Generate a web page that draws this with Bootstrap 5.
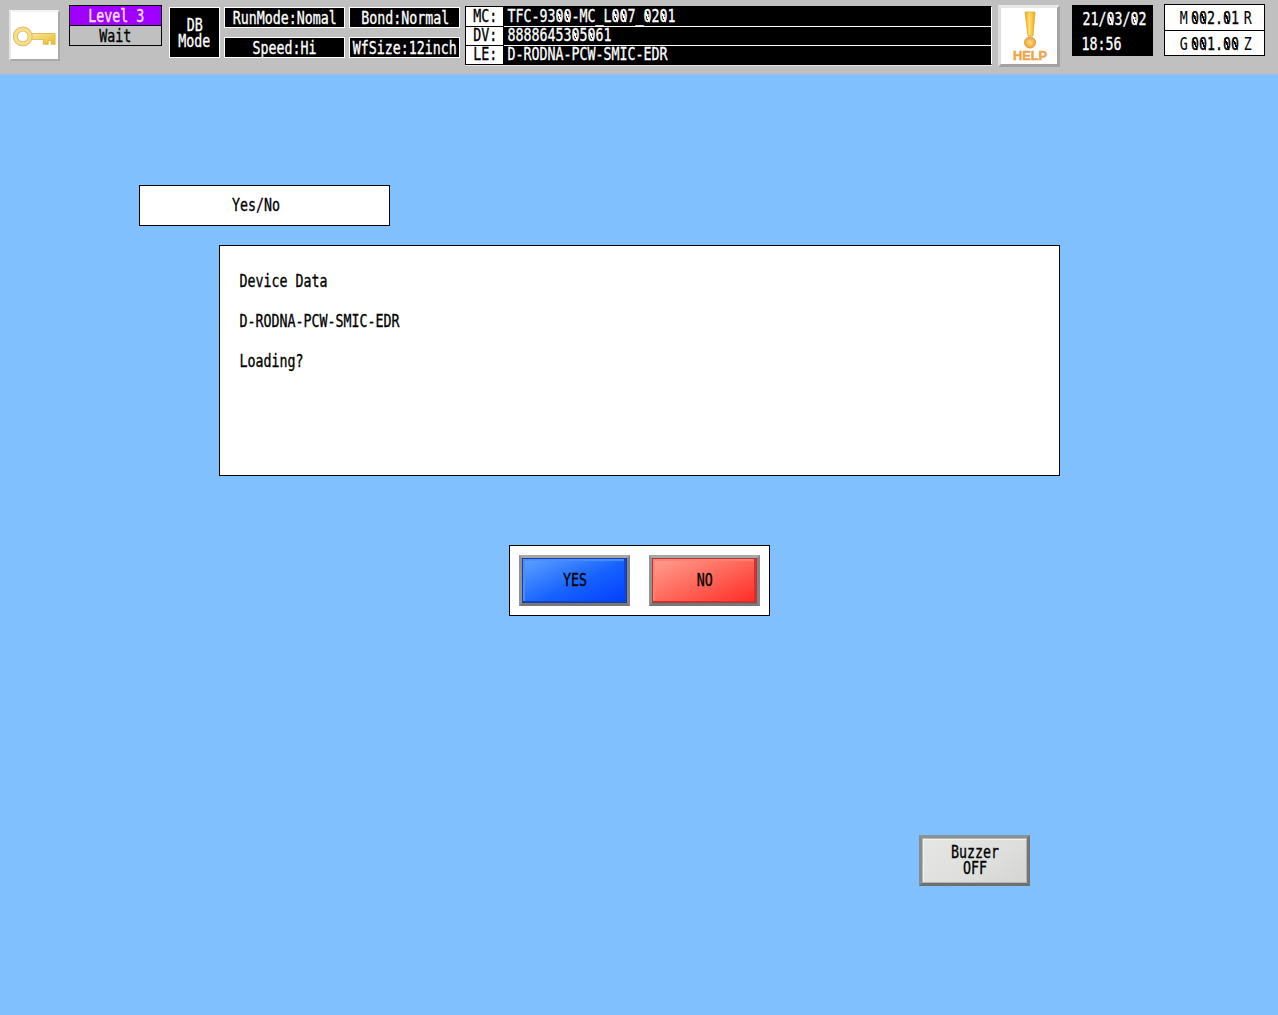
<!DOCTYPE html>
<html lang="en">
<head>
<meta charset="utf-8">
<title>Yes/No</title>
<link href="https://cdn.jsdelivr.net/npm/bootstrap@5.3.0/dist/css/bootstrap.min.css" rel="stylesheet">
<style>
body{background:#80c0ff;color:#000;font:17.5px/16px "DejaVu Sans Mono",monospace;width:1278px;height:1015px;overflow:hidden}
.topbar{height:75px;background:linear-gradient(#c0c0c0 72px,#b9bfc6 74px,#80c0ff 75px)}
/* terminal face: every character cell is 8px wide */
.tx{display:inline-block;white-space:pre;transform:translate(.4px,-.7px) scaleX(.7593);flex:none;-webkit-text-stroke:.35px currentColor}
.level .tx,.blk .tx,.key3d .tx{transform:translate(.3px,0) scaleX(.7593)}
.tl{transform-origin:0 50%}
/* slash through the zero */
.z{background:linear-gradient(to top right,transparent 42%,currentColor 42% 58%,transparent 58%) 2px 4px/6.5px 12px no-repeat}
.keybtn{width:51px;height:51px;margin:10px 0 0 9px;background:#fff;border:2px solid;border-color:#f2f2f2 #aaa #aaa #e6e6e6}
.level{width:93px;height:41px;margin:5px 0 0 9px;border:1px solid #000}
.lv-a{height:20px;background:#a000ff;color:#ffe8ff;border-bottom:1px solid #000}
.lv-b{height:19px}
.blk{background:#000;color:#fff;border:1px solid #fff}
.db{width:51px;height:51px;margin:7px 0 0 7px}
.modes{width:236px;margin:7px 0 0 4px;display:grid;grid-template-columns:121px 111px;gap:9px 4px}
.modes .blk{height:21px}
.ids{width:527px;height:59px;margin:6px 0 0 5px;border:1px solid #000}
.idrow{height:19px}
.idrow+.idrow{height:19px;border-top:1px solid #000}
.idlab{width:38px;background:#fff;border-right:1px solid #000}
.idval{background:#000;color:#fff;padding-left:3px}
.idval .tx{position:relative;z-index:1}
.idrow+.idrow .idval{box-shadow:0 -1px #fff}
.ids{border-right-color:#fff;box-shadow:0 1px #e4e4e4}
.help{width:62px;height:62px;margin:5px 0 0 6px;background:#fff;border:3px solid;border-color:#e8e8e8 #a2a2a2 #a2a2a2 #dedede}
.clock{width:81px;height:51px;margin:5px 0 0 12px;background:#000;color:#fff;padding:7px 0 0 10px}
.clock .tx+.tx{margin-top:9px;margin-left:-1px}
.pos{width:101px;height:52px;margin:4px 0 0 11px;background:#fff;border:1px solid #000}
.pos>div{height:25px;padding:3px 0 0 1px}
.pos>div+div{border-top:1px solid #000}
.cell{display:flex;justify-content:center;width:8px}
.cell .tx{-webkit-text-stroke-width:.1px}
.cell6{display:flex;justify-content:center;width:48px;margin:0 4px}
.panel{background:#fff;border:1px solid #000}
.ttl{width:251px;height:41px;margin:110px 0 0 139px;padding-right:17px}
.msg{width:841px;height:231px;margin:19px 0 0 219px;padding:28px 0 0 19px;gap:24px}
.choice{width:261px;height:71px;margin:69px 0 0 509px;padding:9px}
.key3d{width:111px;height:51px;border:3px solid;border-color:#a8a8a8 #858585 #777 #929292;border-radius:0;padding:0 0 1px;font:inherit;color:#000}
.yes{background:linear-gradient(155deg,#62a5ff,#1762ff 55%,#003dff);box-shadow:inset 0 0 0 1px #143fa7,inset -2px -1px 0 1px #1444cc,inset 3px 3px 1px #4c8dfa}
.no{background:linear-gradient(155deg,#ffa294,#ff6558 52%,#ff2824);box-shadow:inset 0 0 0 1px #ac3d36,inset -2px -1px 0 1px #d72f2b,inset 3px 3px 1px #ff8072}
.buz{background:linear-gradient(145deg,#e6e6e4,#dededc 60%,#d4d4d2);border-color:#8a9299 #747474 #6d7072 #858b91;box-shadow:inset 0 0 0 1px #b5b5b2,inset 2px 2px 0 #f2f2f0;margin:219px 0 0 919px;padding-bottom:2px}
</style>
<script src="https://cdn.jsdelivr.net/npm/bootstrap@5.3.0/dist/js/bootstrap.bundle.min.js"></script>
</head>
<body>
<header class="topbar d-flex align-items-start">
 <div class="keybtn flex-shrink-0">
  <svg width="47" height="47" viewBox="0 0 48 48" class="d-block"><defs><linearGradient id="k" x2="1" y2="1"><stop stop-color="#f6e9a4"/><stop offset="1" stop-color="#efb923"/></linearGradient></defs>
  <path d="M20 22H45V33H41V29H38V33H33V28H20Z" fill="url(#k)" stroke="#dcae3c" stroke-width=".8"/><circle cx="12" cy="25" r="7.6" fill="#fff" stroke="#d6b366" stroke-width="5"/><circle cx="12" cy="25" r="7.6" fill="none" stroke="#f5df85" stroke-width="3.4"/></svg>
 </div>
 <div class="level flex-shrink-0"><div class="lv-a d-flex justify-content-center align-items-center"><span class="tx">Level 3</span></div><div class="lv-b d-flex justify-content-center align-items-center"><span class="tx">Wait</span></div></div>
 <div class="blk db d-flex flex-column flex-shrink-0 align-items-center justify-content-center"><span class="tx">DB</span><span class="tx">Mode</span></div>
 <div class="modes flex-shrink-0">
  <div class="blk d-flex justify-content-center align-items-center"><span class="tx">RunMode:Nomal</span></div>
  <div class="blk d-flex justify-content-center align-items-center"><span class="tx">Bond:Normal</span></div>
  <div class="blk d-flex justify-content-center align-items-center"><span class="tx">Speed:Hi</span></div>
  <div class="blk d-flex justify-content-center align-items-center"><span class="tx">WfSize:12inch</span></div>
 </div>
 <div class="ids flex-shrink-0">
  <div class="idrow d-flex"><div class="idlab d-flex justify-content-center align-items-center"><span class="tx">MC:</span></div><div class="idval flex-fill d-flex align-items-center"><span class="tx tl">TFC-93<span class="z">0</span><span class="z">0</span>-MC_L<span class="z">0</span><span class="z">0</span>7_<span class="z">0</span>2<span class="z">0</span>1</span></div></div>
  <div class="idrow d-flex"><div class="idlab d-flex justify-content-center align-items-center"><span class="tx">DV:</span></div><div class="idval flex-fill d-flex align-items-center"><span class="tx tl">88886453<span class="z">0</span>5<span class="z">0</span>61</span></div></div>
  <div class="idrow d-flex"><div class="idlab d-flex justify-content-center align-items-center"><span class="tx">LE:</span></div><div class="idval flex-fill d-flex align-items-center"><span class="tx tl">D-RODNA-PCW-SMIC-EDR</span></div></div>
 </div>
 <div class="help flex-shrink-0">
  <svg width="56" height="56" viewBox="0 0 56 56" class="d-block"><defs><linearGradient id="h"><stop stop-color="#f3a51c"/><stop offset=".45" stop-color="#ffe36a"/><stop offset="1" stop-color="#f0a21c"/></linearGradient><radialGradient id="g"><stop stop-color="#ffdf7a"/><stop offset="1" stop-color="#eda23b"/></radialGradient></defs>
  <path d="M24 4H34L32 28H27Z" fill="url(#h)" stroke="#e5a63a" stroke-width=".8"/><circle cx="29" cy="34.5" r="5.6" fill="url(#g)" stroke="#e0963a" stroke-width=".8"/><text x="12" y="51.5" font-family="Liberation Sans,sans-serif" font-weight="700" font-size="13" textLength="34" lengthAdjust="spacingAndGlyphs" fill="#f0a848" stroke="#e9a24a" stroke-width=".5">HELP</text></svg>
 </div>
 <div class="clock flex-shrink-0 d-flex flex-column align-items-start"><span class="tx tl">21/<span class="z">0</span>3/<span class="z">0</span>2</span><span class="tx tl">18:56</span></div>
 <div class="pos flex-shrink-0">
  <div class="d-flex justify-content-center align-items-center"><span class="cell"><span class="tx">M</span></span><span class="cell6"><span class="tx"><span class="z">0</span><span class="z">0</span>2.<span class="z">0</span>1</span></span><span class="cell"><span class="tx">R</span></span></div>
  <div class="d-flex justify-content-center align-items-center"><span class="cell"><span class="tx">G</span></span><span class="cell6"><span class="tx"><span class="z">0</span><span class="z">0</span>1.<span class="z">0</span><span class="z">0</span></span></span><span class="cell"><span class="tx">Z</span></span></div>
 </div>
</header>
<main class="d-flex flex-column align-items-start">
 <div class="panel ttl d-flex align-items-center justify-content-center"><span class="tx">Yes/No</span></div>
 <div class="panel msg d-flex flex-column align-items-start"><span class="tx tl">Device Data</span><span class="tx tl">D-RODNA-PCW-SMIC-EDR</span><span class="tx tl">Loading?</span></div>
 <div class="panel choice d-flex justify-content-between"><button class="key3d yes"><span class="tx">YES</span></button><button class="key3d no"><span class="tx">NO</span></button></div>
 <button class="key3d buz d-flex flex-column align-items-center justify-content-center"><span class="tx">Buzzer</span><span class="tx">OFF</span></button>
</main>
</body>
</html>
